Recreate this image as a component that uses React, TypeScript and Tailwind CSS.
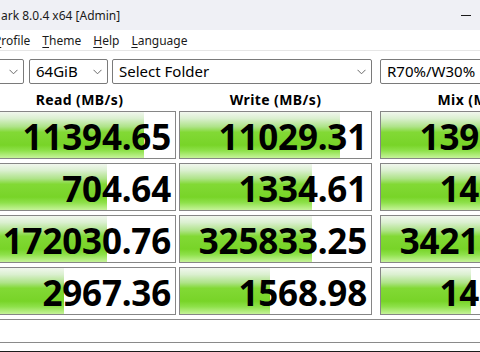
import React from 'react'

const rows = [
  { read: '11394.65', rp: 84, write: '11029.31', wp: 84, mix: '13952.18', mp: 100 },
  { read: '704.64', rp: 64.5, write: '1334.61', wp: 69, mix: '1406.35', mp: 100 },
  { read: '172030.76', rp: 64.5, write: '325833.25', wp: 69, mix: '342159.07', mp: 100 },
  { read: '2967.36', rp: 42, write: '1568.98', wp: 47, mix: '1423.66', mp: 47 },
]

const Chevron = () => (
  <svg width="9" height="6" viewBox="0 0 9 6" className="shrink-0">
    <path d="M0.5 0.8 L4.5 4.8 L8.5 0.8" fill="none" stroke="#6a6a6a" strokeWidth="1" />
  </svg>
)

const Combo = ({ label, className }: { label: string; className: string }) => (
  <div
    className={`h-[25px] border border-[#7a7a7a] rounded-[2px] bg-white flex items-center pl-[6px] pr-[5px] shrink-0 ${className}`}
  >
    <span className="flex-1 text-[15px] text-black leading-none whitespace-nowrap">{label}</span>
    <Chevron />
  </div>
)

const Cell = ({ value, pct }: { value: string; pct: number }) => (
  <div className="h-[48px] border border-[#868686] bg-white relative overflow-hidden">
    {/* green score bar */}
    <div
      className="absolute left-0 top-0 bottom-0 bg-[linear-gradient(to_bottom,#f1f7ee_0%,#dbf0d0_14%,#aee388_32%,#82d935_44%,#78d428_72%,#8ee14a_84%,#c6f39a_100%)]"
      style={{ width: `${pct}%` }}
    />
    <div className="relative h-full flex items-center justify-end pr-[4px] pt-[2px]">
      <span className="text-[35px] font-bold text-black leading-none tracking-[-0.2px]">{value}</span>
    </div>
  </div>
)

const Column = ({ title, cells, className }: { title: string; cells: { v: string; p: number }[]; className: string }) => (
  <div className={`w-[193px] shrink-0 flex flex-col ${className}`}>
    <div className="h-[27px] flex items-center justify-center pt-[3px] text-[14px] font-bold text-black tracking-[0.4px] whitespace-nowrap">
      {title}
    </div>
    <div className="flex flex-col gap-[4px]">
      {cells.map((c, i) => (
        <Cell key={i} value={c.v} pct={c.p} />
      ))}
    </div>
  </div>
)

const App = () => {
  return (
    <div className="w-[480px] h-[352px] overflow-hidden bg-white flex flex-col font-['Noto_Sans',sans-serif]">
      {/* title bar */}
      <div className="h-[30px] shrink-0 bg-[#eff0f5] flex items-center justify-between">
        <span className="text-[12px] text-[#1a1a1a] pl-[1px] pt-[2px] whitespace-nowrap">ark 8.0.4 x64 [Admin]</span>
        <div className="w-[10px] h-[1px] bg-[#1a1a1a] mr-[9px] mt-[1px]" />
      </div>

      {/* menu */}
      <div className="h-[21px] shrink-0 border-b border-[#e6e6e6] flex items-center gap-[12px] text-[12px] text-[#1a1a1a] pt-[2px] -ml-[6px]">
        <span><span className="underline underline-offset-2">P</span>rofile</span>
        <span><span className="underline underline-offset-2">T</span>heme</span>
        <span><span className="underline underline-offset-2">H</span>elp</span>
        <span><span className="underline underline-offset-2">L</span>anguage</span>
      </div>

      {/* settings */}
      <div className="mt-[8px] flex items-center shrink-0 -ml-[37px]">
        <Combo label="" className="w-[61px]" />
        <Combo label="64GiB" className="w-[79px] ml-[5px]" />
        <Combo label="Select Folder" className="w-[260px] ml-[4px]" />
        <Combo label="R70%/W30%" className="w-[193px] ml-[8px]" />
      </div>

      {/* results */}
      <div className="flex -ml-[17px] shrink-0">
        <Column title="Read (MB/s)" cells={rows.map((r) => ({ v: r.read, p: r.rp }))} className="" />
        <Column title="Write (MB/s)" cells={rows.map((r) => ({ v: r.write, p: r.wp }))} className="ml-[3px]" />
        <Column title="Mix (MB/s)" cells={rows.map((r) => ({ v: r.mix, p: r.mp }))} className="ml-[8px]" />
      </div>

      {/* comment */}
      <div className="mt-[4px] h-[24px] shrink-0 border-y border-[#8a8a8a] bg-white" />
      <div className="flex-1" />
      <div className="h-[1px] shrink-0 bg-[#1c1c1c]" />
    </div>
  )
}

export default App
